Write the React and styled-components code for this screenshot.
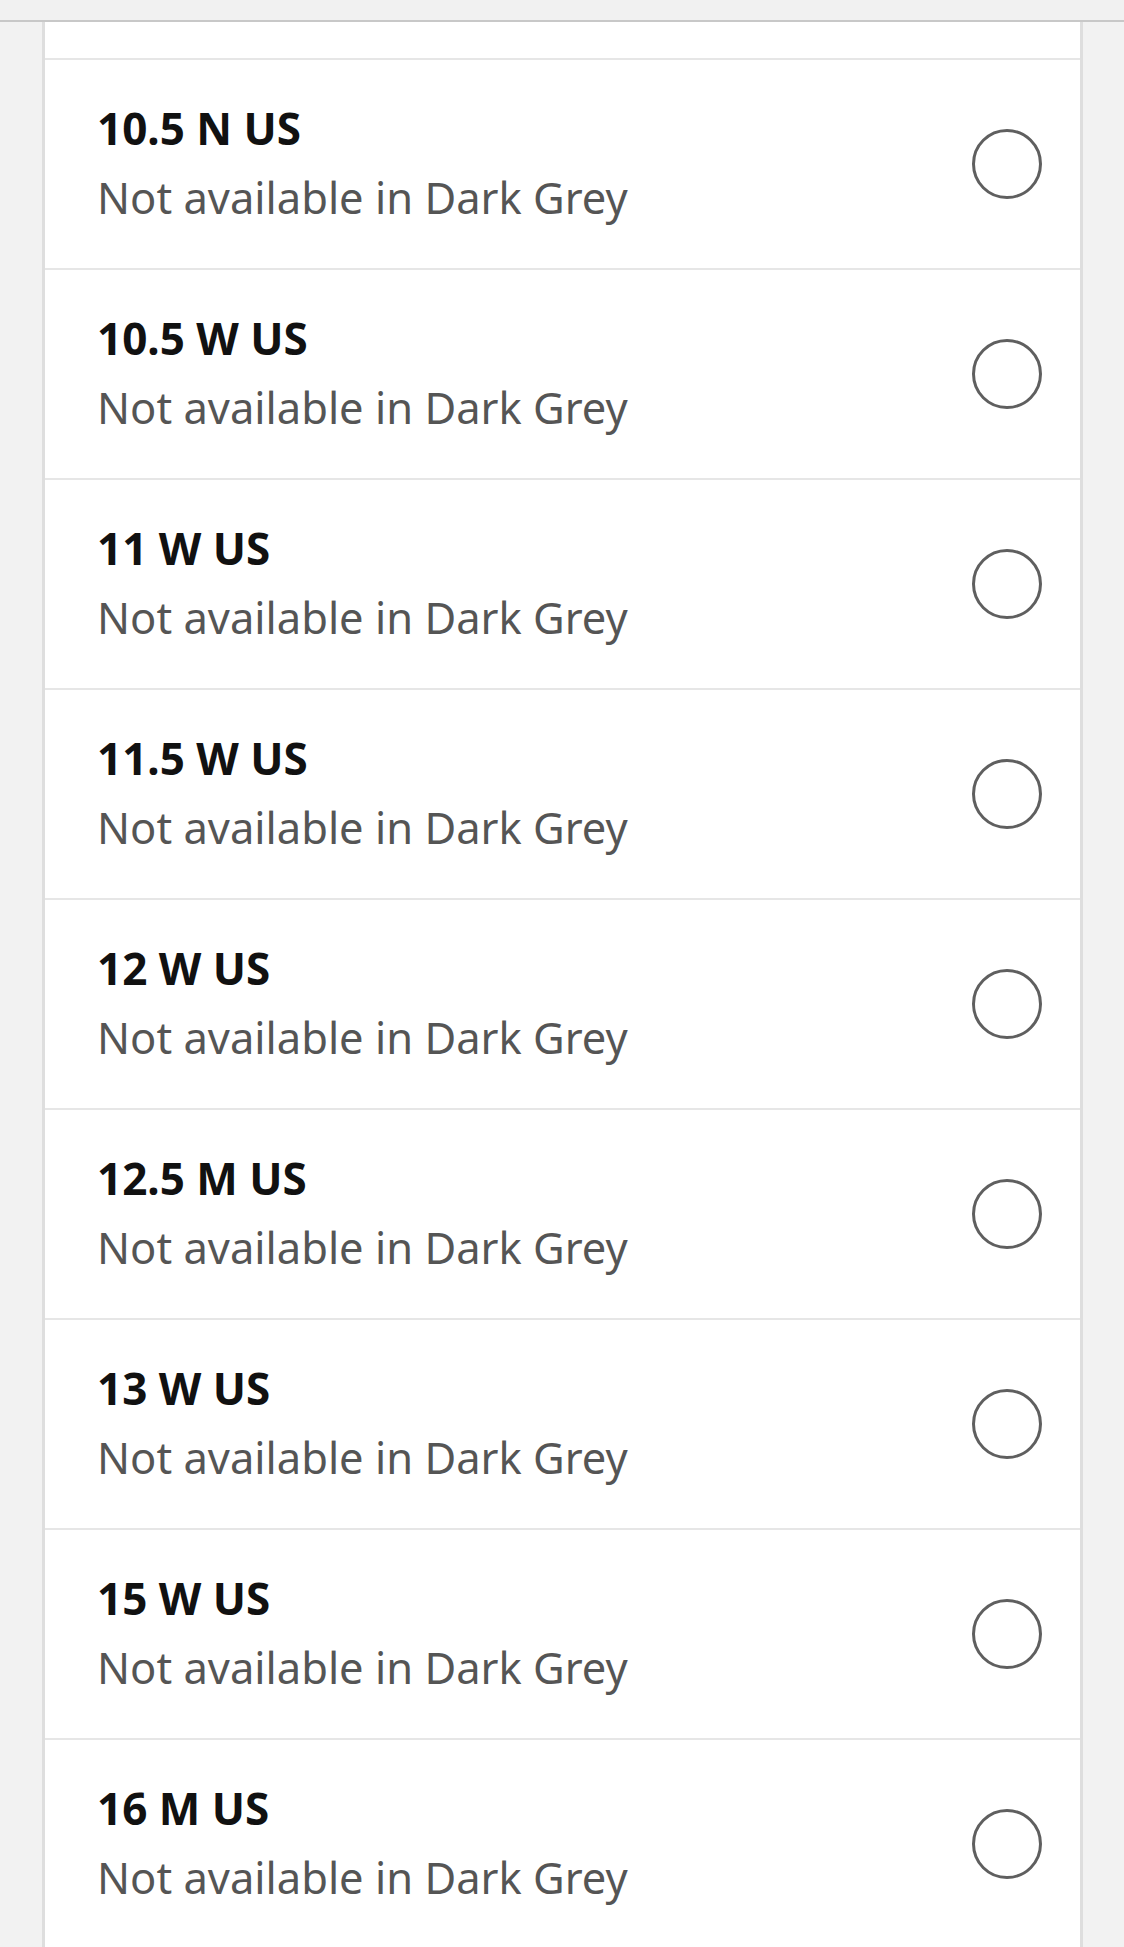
import React from 'react';
import styled, { createGlobalStyle } from 'styled-components';

const GlobalStyle = createGlobalStyle`
  html, body {
    margin: 0;
    padding: 0;
    background: #f2f2f2;
  }
  body {
    font-family: "Noto Sans", "Open Sans", sans-serif;
  }
`;

const sizes = [
    '10.5 N US',
    '10.5 W US',
    '11 W US',
    '11.5 W US',
    '12 W US',
    '12.5 M US',
    '13 W US',
    '15 W US',
    '16 M US',
];

function App() {
    return (
        <React.Fragment>
            <GlobalStyle />
            <Page>
                <TopBar />
                <Panel>
                    <PrevRow />
                    {sizes.map((s) => (
                        <SizeRow key={s}>
                            <Details>
                                <SizeTitle>{s}</SizeTitle>
                                <SizeNote>Not available in Dark Grey</SizeNote>
                            </Details>
                            <Radio />
                        </SizeRow>
                    ))}
                </Panel>
            </Page>
        </React.Fragment>
    );
}

export default App;

const Page = styled.div`
    height: 1947px;
    overflow: hidden;
    background: #f2f2f2;
`

const TopBar = styled.div`
    height: 20px;
    background: #f1f1f1;
    border-bottom: 2px solid #c8c8c8;
`

const Panel = styled.div`
    margin: 0 41px 0 42px;
    background: #ffffff;
    border-left: 3px solid #dedede;
    border-right: 3px solid #dedede;
`

const PrevRow = styled.div`
    height: 36px;
`

const SizeRow = styled.div`
    display: flex;
    align-items: center;
    height: 208px;
    border-top: 2px solid #e6e6e6;
    padding: 0 38px 0 52px;
`

const Details = styled.div`
    flex: 1;
    align-self: flex-start;
    display: flex;
    flex-direction: column;
    padding-top: 36px;
`

const SizeTitle = styled.div`
    font-size: 44px;
    font-weight: 700;
    color: #111111;
    line-height: 65px;
`

const SizeNote = styled.div`
    font-size: 43.5px;
    font-weight: 400;
    color: #555555;
    line-height: 73px;
`

const Radio = styled.div`
    width: 64px;
    height: 64px;
    border: 3px solid #5f5f5f;
    border-radius: 50%;
    box-sizing: content-box;
`
